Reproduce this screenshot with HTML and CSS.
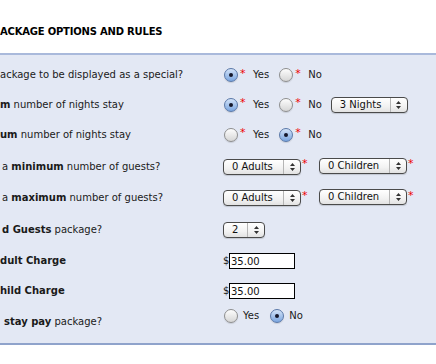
FILE: index.html
```html
<!DOCTYPE html>
<html>
<head>
<meta charset="utf-8">
<title>Package options and rules</title>
<link rel="stylesheet" href="styles.css">
</head>
<body>
<h2 class="title">ACKAGE OPTIONS AND RULES</h2>
<div class="panel">
  <div class="lbl">ackage to be displayed as a special?</div>
  <div class="ctl">
    <label class="opt"><span class="radio on"></span><span class="req">*</span>Yes</label>
    <label class="opt"><span class="radio"></span><span class="req">*</span>No</label>
  </div>

  <div class="lbl"><b>m</b> number of nights stay</div>
  <div class="ctl">
    <label class="opt"><span class="radio on"></span><span class="req">*</span>Yes</label>
    <label class="opt"><span class="radio"></span><span class="req">*</span>No</label>
    <span class="sel sel-nights"><span class="sel-text">3 Nights</span><span class="sel-arrows"><svg width="7" height="10" viewBox="0 0 7 10"><path d="M3.5 1L6 4H1Z M3.5 9L6 6H1Z" fill="#333"/></svg></span></span>
  </div>

  <div class="lbl"><b>um</b> number of nights stay</div>
  <div class="ctl">
    <label class="opt"><span class="radio"></span><span class="req">*</span>Yes</label>
    <label class="opt"><span class="radio on"></span><span class="req">*</span>No</label>
  </div>

  <div class="lbl pad2">a <b>minimum</b> number of guests?</div>
  <div class="ctl">
    <span class="sel sel-adults"><span class="sel-text">0 Adults</span><span class="sel-arrows"><svg width="7" height="10" viewBox="0 0 7 10"><path d="M3.5 1L6 4H1Z M3.5 9L6 6H1Z" fill="#333"/></svg></span></span><span class="req sreq">*</span>
    <span class="sel sel-children"><span class="sel-text">0 Children</span><span class="sel-arrows"><svg width="7" height="10" viewBox="0 0 7 10"><path d="M3.5 1L6 4H1Z M3.5 9L6 6H1Z" fill="#333"/></svg></span></span><span class="req sreq">*</span>
  </div>

  <div class="lbl pad2">a <b>maximum</b> number of guests?</div>
  <div class="ctl">
    <span class="sel sel-adults"><span class="sel-text">0 Adults</span><span class="sel-arrows"><svg width="7" height="10" viewBox="0 0 7 10"><path d="M3.5 1L6 4H1Z M3.5 9L6 6H1Z" fill="#333"/></svg></span></span><span class="req sreq">*</span>
    <span class="sel sel-children"><span class="sel-text">0 Children</span><span class="sel-arrows"><svg width="7" height="10" viewBox="0 0 7 10"><path d="M3.5 1L6 4H1Z M3.5 9L6 6H1Z" fill="#333"/></svg></span></span><span class="req sreq">*</span>
  </div>

  <div class="lbl pad2"><b>d Guests</b> package?</div>
  <div class="ctl">
    <span class="sel sel-two"><span class="sel-text">2</span><span class="sel-arrows"><svg width="7" height="10" viewBox="0 0 7 10"><path d="M3.5 1L6 4H1Z M3.5 9L6 6H1Z" fill="#333"/></svg></span></span>
  </div>

  <div class="lbl"><b>dult Charge</b></div>
  <div class="ctl"><span class="dollar">$</span><input class="amt" type="text" value="35.00"></div>

  <div class="lbl"><b>hild Charge</b></div>
  <div class="ctl"><span class="dollar">$</span><input class="amt" type="text" value="35.00"></div>

  <div class="lbl pad4 last"><b>stay pay</b> package?</div>
  <div class="ctl last">
    <label class="opt plain"><span class="radio"></span>Yes</label>
    <label class="opt plain"><span class="radio on"></span>No</label>
  </div>
</div>
</body>
</html>
```
FILE: styles.css
```css
body {
  margin: 0;
  background: #fff;
  font-family: "DejaVu Sans", Verdana, sans-serif;
  font-size: 10px;
  color: #1a1a1a;
}

.title {
  margin: 0 0 14px;
  padding-top: 25px;
  font-size: 10px;
  line-height: 14px;
  font-weight: bold;
  letter-spacing: -0.2px;
  color: #000;
}

.panel {
  display: grid;
  grid-template-columns: 223px auto;
  grid-template-rows: 30px 29px 31px 33px 30px 33px 30px 30px 26px;
  align-items: center;
  padding: 5px 0 11px;
  background: #e3e8f4;
  border-top: 2px solid #a9b9db;
  border-bottom: 2px solid #8fa3cb;
}

.lbl {
  white-space: nowrap;
  line-height: 12px;
  overflow: hidden;
}
.lbl b { font-weight: bold; }
.pad2 { padding-left: 2px; }
.pad4 { padding-left: 4px; }
.lbl.last { margin-top: 6px; }

.ctl {
  display: flex;
  align-items: center;
  white-space: nowrap;
  line-height: 12px;
}
.ctl.last { margin-bottom: 6px; }

.opt {
  display: flex;
  align-items: center;
  margin-right: 9px;
}
.opt.plain { margin-right: 10px; }
.opt.plain .radio { margin-right: 5px; }

.radio {
  flex: none;
  width: 14px;
  height: 14px;
  box-sizing: border-box;
  margin-left: 1px;
  border-radius: 50%;
  border: 1px solid #8e8e8e;
  background: linear-gradient(#fdfdfd, #d6d6d6);
  box-shadow: 0 1px 1px rgba(0, 0, 0, 0.12);
  display: flex;
  align-items: center;
  justify-content: center;
}
.radio.on {
  border-color: #5a78a8;
  background: linear-gradient(#d3e3f8, #7ba6e0);
}
.radio.on::after {
  content: "";
  width: 4px;
  height: 4px;
  border-radius: 50%;
  background: #15172a;
}

.req {
  color: #e00;
  font-size: 11px;
  line-height: 11px;
  width: 6px;
  margin: -4px 7px 0 2px;
}
.sreq {
  margin: -6px 11px 0 1px;
}

.sel {
  flex: none;
  display: flex;
  align-items: stretch;
  height: 16px;
  box-sizing: border-box;
  border: 1px solid #4a4a4a;
  border-radius: 4px;
  background: linear-gradient(#ffffff, #f2f2f2 60%, #e2e2e2);
  box-shadow: 0 1px 1px rgba(0, 0, 0, 0.15);
  color: #111;
}
.sel-text {
  flex: 1;
  padding-left: 8px;
  line-height: 14px;
}
.sel-arrows {
  width: 16px;
  border-left: 1px solid #b5b5b5;
  display: flex;
  align-items: center;
  justify-content: center;
}
.sel-nights { width: 77px; }
.sel-adults { width: 78px; }
.sel-children { width: 88px; margin-top: -2px; }
.sel-two { width: 42px; }

.dollar { width: 6px; }
.amt {
  width: 66px;
  height: 16px;
  box-sizing: border-box;
  margin: 0;
  padding: 0 1px;
  border: 1px solid #000;
  background: #fff;
  font-family: "DejaVu Sans", Verdana, sans-serif;
  font-size: 10px;
  color: #111;
  outline: none;
}
```
